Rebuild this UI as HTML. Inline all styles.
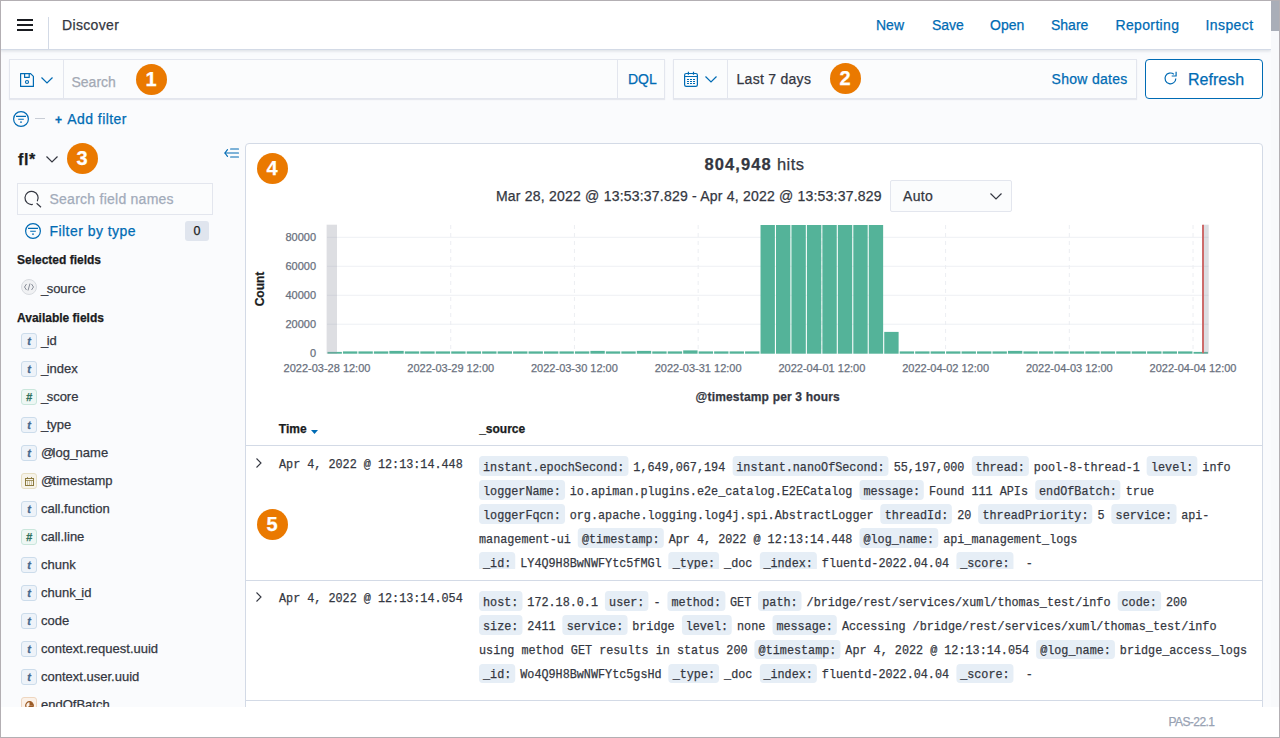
<!DOCTYPE html>
<html><head><meta charset="utf-8">
<style>
*{box-sizing:border-box;margin:0;padding:0}
html,body{width:1280px;height:738px;overflow:hidden}
body{position:relative;-webkit-text-stroke:0.25px currentColor;background:#FAFBFD;font-family:"Liberation Sans",sans-serif;color:#343741}
.a{position:absolute}
.t{position:absolute;white-space:nowrap;line-height:1}
.lnk{color:#006BB4}
.s14{font-size:14px}
.badge{position:absolute;width:31px;height:31px;border-radius:50%;background:#EA7900;color:#fff;font-weight:bold;font-size:20px;line-height:31px;text-align:center}
.mono{font-family:"Liberation Mono",monospace}
svg{position:absolute;overflow:visible}

.us{font-style:normal;letter-spacing:-1.6px}
.fld{left:41px;font-size:13px;color:#343741}
.tok{position:absolute;left:21px;width:16px;height:16px;border-radius:3px;border:1px solid;font:bold italic 11px/14px "Liberation Sans",sans-serif;text-align:center}
.tok-t{background:#EEF3F9;border-color:#CCDCEB;color:#45678C}
.tok-n{background:#EEF7F4;border-color:#C9E6DC;color:#33725E}
.tok-d{background:#F6F3EA;border-color:#E6DEC2;color:#8C7A3E}
.tok-b{background:#FBF1E8;border-color:#EED6C0;color:#9B5A25}

.ylab{left:256px;width:60px;text-align:right;font-size:11px;color:#69707D}
.xlab{width:120px;text-align:center;font-size:11px;color:#69707D}
.tm{left:278.5px;font-size:13px;color:#343741;transform:scaleX(0.9059);transform-origin:0 0}
.srcl{position:absolute;left:9.2px;white-space:nowrap;font-family:"Liberation Mono",monospace;font-size:13px;line-height:25.08px;height:25.08px;color:#343741;transform:scaleX(0.9059);transform-origin:0 0}
.dt{display:inline-block;vertical-align:baseline;background:#E6EEF6;border-radius:4px;padding:5.17px 4.415px 0px;line-height:14.74px;height:19.8px;margin-right:5.52px}
.dd{white-space:pre}
.r2{line-height:23.28px;height:23.28px}.r2 .dt{padding-top:4.27px}
</style></head><body>

<!-- header -->
<div class="a" id="hdr" style="left:0;top:0;width:1271px;height:50px;background:#fff;border-bottom:1px solid #D3DAE6;box-shadow:0 1px 3px rgba(152,162,179,.35)"></div>
<div class="a" style="left:17px;top:19px;width:16px;height:2px;background:#1A1C21"></div>
<div class="a" style="left:17px;top:24px;width:16px;height:2px;background:#1A1C21"></div>
<div class="a" style="left:17px;top:29px;width:16px;height:2px;background:#1A1C21"></div>
<div class="a" style="left:48px;top:17px;width:1px;height:33px;background:#D3DAE6"></div>
<div class="t s14" style="left:62px;top:18.15px;letter-spacing:0.35px">Discover</div>
<div class="t s14 lnk" style="left:876px;top:18.15px">New</div>
<div class="t s14 lnk" style="left:932px;top:18.15px">Save</div>
<div class="t s14 lnk" style="left:990px;top:18.15px">Open</div>
<div class="t s14 lnk" style="left:1051px;top:18.15px">Share</div>
<div class="t s14 lnk" style="left:1115.5px;top:18.15px;letter-spacing:0.35px">Reporting</div>
<div class="t s14 lnk" style="left:1205.5px;top:18.15px;letter-spacing:0.4px">Inspect</div>

<!-- scrollbar -->
<div class="a" style="left:1271px;top:0;width:9px;height:707px;background:#F8F9FB"></div>
<div class="a" style="left:1271px;top:1px;width:8px;height:30px;background:#A9AEB8"></div>

<!-- query bar -->
<div class="a" style="left:9px;top:59px;width:656px;height:40px;background:#FBFCFD;border:1px solid #E3E6EE;box-shadow:0 1px 1px rgba(152,162,179,.2)"></div>
<div class="a" style="left:63px;top:60px;width:1px;height:38px;background:#E3E6EE"></div>
<div class="a" style="left:617px;top:60px;width:1px;height:38px;background:#E3E6EE"></div>
<svg style="left:20px;top:73px" width="14" height="14" viewBox="0 0 14 14"><path d="M0.6 0.6h10l2.8 2.8v10h-12.8z" fill="none" stroke="#006BB4" stroke-width="1.2" stroke-linejoin="round"/><path d="M4.6 0.6v3.8h4.6v-3.8" fill="none" stroke="#006BB4" stroke-width="1.2" stroke-linejoin="round"/><circle cx="7" cy="9" r="1.5" fill="none" stroke="#006BB4" stroke-width="1.2"/></svg>
<svg style="left:41px;top:77px" width="12" height="7" viewBox="0 0 12 7"><path d="M0.5 0.5l5.5 5.5l5.5-5.5" fill="none" stroke="#006BB4" stroke-width="1.2"/></svg>
<div class="t s14" style="left:71.5px;top:75.15px;color:#A3A9B4">Search</div>
<div class="t s14 lnk" style="left:628px;top:72.15px">DQL</div>

<div class="a" style="left:673px;top:59px;width:464px;height:40px;background:#FBFCFD;border:1px solid #E3E6EE;box-shadow:0 1px 1px rgba(152,162,179,.2)"></div>
<div class="a" style="left:727px;top:60px;width:1px;height:38px;background:#E3E6EE"></div>
<svg style="left:684px;top:72px" width="14" height="15" viewBox="0 0 14 15"><rect x="0.6" y="1.5" width="12.8" height="12.9" rx="1.6" fill="none" stroke="#006BB4" stroke-width="1.2"/><path d="M0.6 4.5h12.8M4.4 -0.2v3M9.5 -0.2v3" stroke="#006BB4" stroke-width="1.2"/><path d="M3 7.5h2M6 7.5h2M9 7.5h2M3 9.5h2M6 9.5h2M9 9.5h2M3 11.5h2M6 11.5h2M9 11.5h2" stroke="#006BB4" stroke-width="1"/></svg>
<svg style="left:705px;top:76px" width="12" height="7" viewBox="0 0 12 7"><path d="M0.5 0.5l5.5 5.5l5.5-5.5" fill="none" stroke="#006BB4" stroke-width="1.2"/></svg>
<div class="t s14" style="left:736.5px;top:72px;letter-spacing:0.28px">Last 7 days</div>
<div class="t s14 lnk" style="left:1051.5px;top:72.3px;letter-spacing:0.3px">Show dates</div>

<div class="a" style="left:1145px;top:59px;width:118px;height:40px;background:#fff;border:1px solid #006BB4;border-radius:4px"></div>
<svg style="left:1164.1px;top:72.2px" width="14" height="13" viewBox="0 0 14 13"><path d="M11.8 6.4A5.4 5.4 0 1 1 9.87 2.26" fill="none" stroke="#006BB4" stroke-width="1.2"/><path d="M12.1 -0.3V4.0H7.7" fill="none" stroke="#006BB4" stroke-width="1.2"/></svg>
<div class="t lnk" style="left:1188px;top:71.5px;font-size:16px">Refresh</div>

<!-- filter row -->
<svg style="left:13px;top:111px" width="16" height="16" viewBox="0 0 16 16"><circle cx="8" cy="8" r="7.4" fill="none" stroke="#006BB4" stroke-width="1.2"/><path d="M3 5.3h10M5.2 8.2h5.6M7.1 11.1h1.8" stroke="#006BB4" stroke-width="1.15"/></svg>
<div class="a" style="left:35px;top:118px;width:10px;height:1px;background:#C8CDD6"></div>
<div class="t lnk" style="left:55px;top:113.5px;font-size:12px;font-weight:bold">+</div><div class="t s14 lnk" style="left:67.2px;top:112px;letter-spacing:0.45px">Add filter</div>


<!-- sidebar -->
<div class="t" style="left:18px;top:151.9px;font-size:16px;font-weight:bold;color:#1A1C21;letter-spacing:0.6px">fl*</div>
<svg style="left:46px;top:155.5px" width="12" height="7" viewBox="0 0 12 7"><path d="M0.5 0.5l5.5 5.5l5.5-5.5" fill="none" stroke="#343741" stroke-width="1.2"/></svg>
<svg style="left:223.5px;top:147.5px" width="15" height="10" viewBox="0 0 15 10"><path d="M3.5 1.7L0.9 5L3.5 8.3" fill="none" stroke="#006BB4" stroke-width="1.2" stroke-linecap="round" stroke-linejoin="round"/><path d="M1 5h13.5M6.6 1h7.9M6.6 9h7.9" stroke="#006BB4" stroke-width="1.15" stroke-linecap="round"/></svg>
<div class="a" style="left:17px;top:183px;width:196px;height:32px;background:#FBFCFD;border:1px solid #E3E6EE"></div>
<svg style="left:26.2px;top:191px" width="16" height="16" viewBox="0 0 16 16"><path d="M11.3 10.2A6.6 6.6 0 1 0 6.8 13.4" fill="none" stroke="#343741" stroke-width="1.2"/><path d="M10.6 12.3l4.4 4" stroke="#343741" stroke-width="1.2"/></svg>
<div class="t" style="left:49.5px;top:192px;font-size:14px;letter-spacing:0.25px;color:#A2ABBA">Search field names</div>
<svg style="left:25px;top:222.5px" width="16" height="16" viewBox="0 0 16 16"><circle cx="8" cy="8" r="7.4" fill="none" stroke="#006BB4" stroke-width="1.2"/><path d="M3 5.3h10M5.2 8.2h5.6M7.1 11.1h1.8" stroke="#006BB4" stroke-width="1.15"/></svg>
<div class="t lnk" style="left:49.5px;top:223.5px;font-size:14px;letter-spacing:0.45px">Filter by type</div>
<div class="a" style="left:185px;top:221px;width:24px;height:20px;background:#E0E5EE;border-radius:3px;font-size:12.5px;line-height:21.5px;text-align:center;color:#1A1C21">0</div>
<div class="t" style="left:17px;top:253.7px;font-size:12px;font-weight:bold;color:#1A1C21">Selected fields</div>
<div class="a" style="left:21px;top:279px;width:16px;height:16px;border-radius:50%;background:#F0F1F3;border:1px solid #D8DBE0"></div>
<svg style="left:24px;top:283px" width="10" height="8" viewBox="0 0 10 8"><path d="M2.5 1L0.5 4l2 3M7.5 1l2 3-2 3M6 0.5L4 7.5" fill="none" stroke="#7A808C" stroke-width="0.9"/></svg>
<div class="t fld" style="top:281.9px"><i class="us">_</i>source</div>
<div class="t" style="left:17px;top:311.8px;font-size:12px;font-weight:bold;color:#1A1C21">Available fields</div>
<div class="tok tok-t" style="top:333px">t</div>
<div class="t fld" style="top:334.00px"><i class="us">_</i>id</div>
<div class="tok tok-t" style="top:361px">t</div>
<div class="t fld" style="top:362.00px"><i class="us">_</i>index</div>
<div class="tok tok-n" style="top:389px">#</div>
<div class="t fld" style="top:390.00px"><i class="us">_</i>score</div>
<div class="tok tok-t" style="top:417px">t</div>
<div class="t fld" style="top:418.00px"><i class="us">_</i>type</div>
<div class="tok tok-t" style="top:445px">t</div>
<div class="t fld" style="top:446.00px"><i class="us">@</i>log<i class="us">_</i>name</div>
<div class="tok tok-d" style="top:473px"><svg style="left:3px;top:3px" width="9" height="9" viewBox="0 0 9 9"><rect x="0.5" y="1.5" width="8" height="7" fill="none" stroke="#8C7A3E" stroke-width="1"/><path d="M0.5 3.5h8M2.5 0v2M6.5 0v2M2 5h1M4 5h1M6 5h1M2 7h1M4 7h1M6 7h1" stroke="#8C7A3E" stroke-width="0.8"/></svg></div>
<div class="t fld" style="top:474.00px"><i class="us">@</i>timestamp</div>
<div class="tok tok-t" style="top:501px">t</div>
<div class="t fld" style="top:502.00px">call.function</div>
<div class="tok tok-n" style="top:529px">#</div>
<div class="t fld" style="top:530.00px">call.line</div>
<div class="tok tok-t" style="top:557px">t</div>
<div class="t fld" style="top:558.00px">chunk</div>
<div class="tok tok-t" style="top:585px">t</div>
<div class="t fld" style="top:586.00px">chunk<i class="us">_</i>id</div>
<div class="tok tok-t" style="top:613px">t</div>
<div class="t fld" style="top:614.00px">code</div>
<div class="tok tok-t" style="top:641px">t</div>
<div class="t fld" style="top:642.00px">context.request.uuid</div>
<div class="tok tok-t" style="top:669px">t</div>
<div class="t fld" style="top:670.00px">context.user.uuid</div>
<div class="tok tok-b" style="top:697px"><svg style="left:3px;top:3px" width="9" height="9" viewBox="0 0 9 9"><circle cx="4.5" cy="4.5" r="3.8" fill="none" stroke="#9B5A25" stroke-width="1.2"/><path d="M4.5 4.5L8.3 4.5A3.8 3.8 0 0 0 4.5 0.7z" fill="#9B5A25"/><path d="M4.5 4.5L1.8 7.2A3.8 3.8 0 0 0 8.3 4.5z" fill="#9B5A25"/></svg></div>
<div class="t fld" style="top:698.00px">endOfBatch</div>

<div class="a" style="left:245px;top:143px;width:1018px;height:600px;background:#fff;border:1px solid #D3DAE6;border-radius:4px"></div>
<div class="t" style="left:704.5px;top:156.3px;font-size:16.5px;color:#343741"><b style="letter-spacing:1.1px">804,948</b><span style="letter-spacing:0.5px"> hits</span></div>
<div class="t" style="left:496px;top:189.15px;font-size:14px;letter-spacing:0.21px;color:#343741">Mar 28, 2022 @ 13:53:37.829 - Apr 4, 2022 @ 13:53:37.829</div>
<div class="a" style="left:890px;top:180px;width:122px;height:32px;background:#FBFCFD;border:1px solid #E3E6EE;border-radius:2px"></div>
<div class="t" style="left:903px;top:189.15px;font-size:14px;letter-spacing:0.3px;color:#343741">Auto</div>
<svg style="left:990px;top:193px" width="12" height="7" viewBox="0 0 12 7"><path d="M0.5 0.5l5.5 5.5l5.5-5.5" fill="none" stroke="#343741" stroke-width="1.2"/></svg>
<svg style="left:0;top:0" width="1280" height="738" viewBox="0 0 1280 738">
<line x1="327.0" y1="324.23" x2="1208.5" y2="324.23" stroke="#EEF0F4" stroke-width="1"/>
<line x1="327.0" y1="295.25" x2="1208.5" y2="295.25" stroke="#EEF0F4" stroke-width="1"/>
<line x1="327.0" y1="266.27" x2="1208.5" y2="266.27" stroke="#EEF0F4" stroke-width="1"/>
<line x1="327.0" y1="237.30" x2="1208.5" y2="237.30" stroke="#EEF0F4" stroke-width="1"/>
<line x1="450.72" y1="225" x2="450.72" y2="353" stroke="#ECEEF2" stroke-width="1" stroke-dasharray="4 4"/>
<line x1="574.44" y1="225" x2="574.44" y2="353" stroke="#ECEEF2" stroke-width="1" stroke-dasharray="4 4"/>
<line x1="698.16" y1="225" x2="698.16" y2="353" stroke="#ECEEF2" stroke-width="1" stroke-dasharray="4 4"/>
<line x1="821.88" y1="225" x2="821.88" y2="353" stroke="#ECEEF2" stroke-width="1" stroke-dasharray="4 4"/>
<line x1="945.60" y1="225" x2="945.60" y2="353" stroke="#ECEEF2" stroke-width="1" stroke-dasharray="4 4"/>
<line x1="1069.32" y1="225" x2="1069.32" y2="353" stroke="#ECEEF2" stroke-width="1" stroke-dasharray="4 4"/>
<line x1="1193.04" y1="225" x2="1193.04" y2="353" stroke="#ECEEF2" stroke-width="1" stroke-dasharray="4 4"/>
<rect x="327.50" y="351.90" width="14.37" height="1.80" fill="#54B399"/>
<rect x="342.96" y="351.40" width="14.37" height="2.30" fill="#54B399"/>
<rect x="358.43" y="351.40" width="14.37" height="2.30" fill="#54B399"/>
<rect x="373.89" y="351.40" width="14.37" height="2.30" fill="#54B399"/>
<rect x="389.36" y="350.90" width="14.37" height="2.80" fill="#54B399"/>
<rect x="404.82" y="351.40" width="14.37" height="2.30" fill="#54B399"/>
<rect x="420.29" y="351.40" width="14.37" height="2.30" fill="#54B399"/>
<rect x="435.75" y="351.40" width="14.37" height="2.30" fill="#54B399"/>
<rect x="451.22" y="351.40" width="14.37" height="2.30" fill="#54B399"/>
<rect x="466.69" y="351.40" width="14.37" height="2.30" fill="#54B399"/>
<rect x="482.15" y="351.40" width="14.37" height="2.30" fill="#54B399"/>
<rect x="497.62" y="351.40" width="14.37" height="2.30" fill="#54B399"/>
<rect x="513.08" y="351.40" width="14.37" height="2.30" fill="#54B399"/>
<rect x="528.54" y="351.40" width="14.37" height="2.30" fill="#54B399"/>
<rect x="544.01" y="351.40" width="14.37" height="2.30" fill="#54B399"/>
<rect x="559.48" y="351.40" width="14.37" height="2.30" fill="#54B399"/>
<rect x="574.94" y="351.40" width="14.37" height="2.30" fill="#54B399"/>
<rect x="590.40" y="350.90" width="14.37" height="2.80" fill="#54B399"/>
<rect x="605.87" y="351.40" width="14.37" height="2.30" fill="#54B399"/>
<rect x="621.34" y="351.40" width="14.37" height="2.30" fill="#54B399"/>
<rect x="636.80" y="350.90" width="14.37" height="2.80" fill="#54B399"/>
<rect x="652.26" y="351.40" width="14.37" height="2.30" fill="#54B399"/>
<rect x="667.73" y="351.40" width="14.37" height="2.30" fill="#54B399"/>
<rect x="683.19" y="350.40" width="14.37" height="3.30" fill="#54B399"/>
<rect x="698.66" y="351.40" width="14.37" height="2.30" fill="#54B399"/>
<rect x="714.12" y="351.40" width="14.37" height="2.30" fill="#54B399"/>
<rect x="729.59" y="351.40" width="14.37" height="2.30" fill="#54B399"/>
<rect x="745.06" y="351.40" width="14.37" height="2.30" fill="#54B399"/>
<rect x="760.52" y="225.00" width="14.37" height="128.70" fill="#54B399"/>
<rect x="775.99" y="225.00" width="14.37" height="128.70" fill="#54B399"/>
<rect x="791.45" y="225.00" width="14.37" height="128.70" fill="#54B399"/>
<rect x="806.91" y="225.00" width="14.37" height="128.70" fill="#54B399"/>
<rect x="822.38" y="225.00" width="14.37" height="128.70" fill="#54B399"/>
<rect x="837.85" y="225.00" width="14.37" height="128.70" fill="#54B399"/>
<rect x="853.31" y="225.00" width="14.37" height="128.70" fill="#54B399"/>
<rect x="868.77" y="225.00" width="14.37" height="128.70" fill="#54B399"/>
<rect x="884.24" y="331.90" width="14.37" height="21.80" fill="#54B399"/>
<rect x="899.71" y="351.40" width="14.37" height="2.30" fill="#54B399"/>
<rect x="915.17" y="351.40" width="14.37" height="2.30" fill="#54B399"/>
<rect x="930.63" y="351.40" width="14.37" height="2.30" fill="#54B399"/>
<rect x="946.10" y="351.40" width="14.37" height="2.30" fill="#54B399"/>
<rect x="961.56" y="351.40" width="14.37" height="2.30" fill="#54B399"/>
<rect x="977.03" y="351.40" width="14.37" height="2.30" fill="#54B399"/>
<rect x="992.50" y="351.40" width="14.37" height="2.30" fill="#54B399"/>
<rect x="1007.96" y="350.90" width="14.37" height="2.80" fill="#54B399"/>
<rect x="1023.42" y="351.40" width="14.37" height="2.30" fill="#54B399"/>
<rect x="1038.89" y="351.40" width="14.37" height="2.30" fill="#54B399"/>
<rect x="1054.36" y="351.40" width="14.37" height="2.30" fill="#54B399"/>
<rect x="1069.82" y="351.40" width="14.37" height="2.30" fill="#54B399"/>
<rect x="1085.28" y="351.40" width="14.37" height="2.30" fill="#54B399"/>
<rect x="1100.75" y="351.40" width="14.37" height="2.30" fill="#54B399"/>
<rect x="1116.22" y="351.40" width="14.37" height="2.30" fill="#54B399"/>
<rect x="1131.68" y="351.40" width="14.37" height="2.30" fill="#54B399"/>
<rect x="1147.14" y="351.40" width="14.37" height="2.30" fill="#54B399"/>
<rect x="1162.61" y="351.40" width="14.37" height="2.30" fill="#54B399"/>
<rect x="1178.08" y="351.40" width="14.37" height="2.30" fill="#54B399"/>
<rect x="1193.54" y="351.90" width="14.37" height="1.80" fill="#54B399"/>
<rect x="326.6" y="224.7" width="10.4" height="129" fill="#8F939F" fill-opacity="0.3"/>
<rect x="1203.3" y="224.7" width="5.4" height="129" fill="#8F939F" fill-opacity="0.3"/>
<line x1="1203" y1="224.7" x2="1203" y2="353.2" stroke="#CC6464" stroke-width="1.9"/>
</svg>
<div class="t ylab" style="top:347.80px">0</div>
<div class="t ylab" style="top:318.83px">20000</div>
<div class="t ylab" style="top:289.85px">40000</div>
<div class="t ylab" style="top:260.88px">60000</div>
<div class="t ylab" style="top:231.90px">80000</div>
<div class="t xlab" style="left:267.00px;top:363.1px">2022-03-28 12:00</div>
<div class="t xlab" style="left:390.72px;top:363.1px">2022-03-29 12:00</div>
<div class="t xlab" style="left:514.44px;top:363.1px">2022-03-30 12:00</div>
<div class="t xlab" style="left:638.16px;top:363.1px">2022-03-31 12:00</div>
<div class="t xlab" style="left:761.88px;top:363.1px">2022-04-01 12:00</div>
<div class="t xlab" style="left:885.60px;top:363.1px">2022-04-02 12:00</div>
<div class="t xlab" style="left:1009.32px;top:363.1px">2022-04-03 12:00</div>
<div class="t xlab" style="left:1133.04px;top:363.1px">2022-04-04 12:00</div>
<div class="t" style="left:243.3px;top:283px;width:34.7px;font-size:12px;font-weight:bold;color:#1A1C21;transform:rotate(-90deg);transform-origin:50% 50%;text-align:center">Count</div>
<div class="t" style="left:695.6px;top:391.3px;font-size:12px;font-weight:bold;letter-spacing:0.18px;color:#343741">@timestamp per 3 hours</div>
<div class="t" style="left:278.8px;top:423.2px;font-size:12px;font-weight:bold;color:#1A1C21">Time</div>
<svg style="left:311px;top:429.5px" width="7" height="4" viewBox="0 0 7 4"><path d="M0 0h7L3.5 4z" fill="#006BB4"/></svg>
<div class="t" style="left:479.2px;top:423.2px;font-size:12px;font-weight:bold;color:#1A1C21">_source</div>
<div class="a" style="left:246px;top:445px;width:1016px;height:1px;background:#D3DAE6"></div>
<svg style="left:255.5px;top:457.5px" width="6" height="10" viewBox="0 0 6 10"><path d="M0.5 0.5L5 5L0.5 9.5" fill="none" stroke="#343741" stroke-width="1.1"/></svg>
<div class="t mono tm" style="top:457.84px">Apr 4, 2022 @ 12:13:14.448</div>
<div class="a" style="left:470px;top:453.9px;width:790px;height:115px;overflow:hidden">
<div class="srcl" style="top:1.40px"><span class="dt">instant.epochSecond:</span><span class="dd">1,649,067,194 </span><span class="dt">instant.nanoOfSecond:</span><span class="dd">55,197,000 </span><span class="dt">thread:</span><span class="dd">pool-8-thread-1 </span><span class="dt">level:</span><span class="dd">info</span></div>
<div class="srcl" style="top:25.40px"><span class="dt">loggerName:</span><span class="dd">io.apiman.plugins.e2e_catalog.E2ECatalog </span><span class="dt">message:</span><span class="dd">Found 111 APIs </span><span class="dt">endOfBatch:</span><span class="dd">true</span></div>
<div class="srcl" style="top:49.40px"><span class="dt">loggerFqcn:</span><span class="dd">org.apache.logging.log4j.spi.AbstractLogger </span><span class="dt">threadId:</span><span class="dd">20 </span><span class="dt">threadPriority:</span><span class="dd">5 </span><span class="dt">service:</span><span class="dd">api-</span></div>
<div class="srcl" style="top:73.40px"><span class="dd">management-ui </span><span class="dt">@timestamp:</span><span class="dd">Apr 4, 2022 @ 12:13:14.448 </span><span class="dt">@log_name:</span><span class="dd">api_management_logs</span></div>
<div class="srcl" style="top:97.40px"><span class="dt">_id:</span><span class="dd">LY4Q9H8BwNWFYtc5fMGl </span><span class="dt">_type:</span><span class="dd">_doc </span><span class="dt">_index:</span><span class="dd">fluentd-2022.04.04 </span><span class="dt">_score:</span><span class="dd"> -</span></div>
</div>
<div class="a" style="left:246px;top:580px;width:1016px;height:1px;background:#D3DAE6"></div>
<svg style="left:255.5px;top:592px" width="6" height="10" viewBox="0 0 6 10"><path d="M0.5 0.5L5 5L0.5 9.5" fill="none" stroke="#343741" stroke-width="1.1"/></svg>
<div class="t mono tm" style="top:592.04px">Apr 4, 2022 @ 12:13:14.054</div>
<div class="srcl r2" style="position:absolute;left:479.2px;top:590.70px"><span class="dt">host:</span><span class="dd">172.18.0.1 </span><span class="dt">user:</span><span class="dd">- </span><span class="dt">method:</span><span class="dd">GET </span><span class="dt">path:</span><span class="dd">/bridge/rest/services/xuml/thomas_test/info </span><span class="dt">code:</span><span class="dd">200</span></div>
<div class="srcl r2" style="position:absolute;left:479.2px;top:614.75px"><span class="dt">size:</span><span class="dd">2411 </span><span class="dt">service:</span><span class="dd">bridge </span><span class="dt">level:</span><span class="dd">none </span><span class="dt">message:</span><span class="dd">Accessing /bridge/rest/services/xuml/thomas_test/info</span></div>
<div class="srcl r2" style="position:absolute;left:479.2px;top:638.80px"><span class="dd">using method GET results in status 200 </span><span class="dt">@timestamp:</span><span class="dd">Apr 4, 2022 @ 12:13:14.054 </span><span class="dt">@log_name:</span><span class="dd">bridge_access_logs</span></div>
<div class="srcl r2" style="position:absolute;left:479.2px;top:662.85px"><span class="dt">_id:</span><span class="dd">Wo4Q9H8BwNWFYtc5gsHd </span><span class="dt">_type:</span><span class="dd">_doc </span><span class="dt">_index:</span><span class="dd">fluentd-2022.04.04 </span><span class="dt">_score:</span><span class="dd"> -</span></div>
<div class="a" style="left:246px;top:699.5px;width:1016px;height:1px;background:#D3DAE6"></div>
<div class="a" style="left:0;top:707px;width:1280px;height:31px;background:#fff"></div>
<div class="t" style="left:1168.4px;top:716.2px;font-size:12px;letter-spacing:-0.55px;color:#98A2B3">PAS-22.1</div>
<!-- badges -->
<div class="badge" style="left:135.5px;top:63.5px">1</div>
<div class="badge" style="left:829.5px;top:63px">2</div>
<div class="badge" style="left:66.5px;top:142.5px">3</div>
<div class="badge" style="left:256.5px;top:152.5px">4</div>
<div class="badge" style="left:256.5px;top:508.5px">5</div>

<!-- frame -->
<div class="a" style="left:0;top:0;width:1280px;height:738px;border:1px solid #B3AFB3;pointer-events:none;z-index:99"></div>
</body></html>
